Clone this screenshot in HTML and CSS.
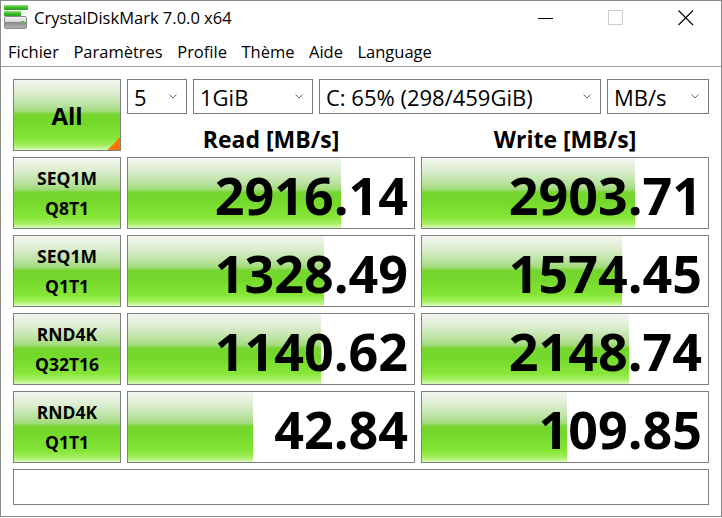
FILE: index.html
```html
<!DOCTYPE html>
<html lang="fr">
<head>
<meta charset="utf-8">
<title>CrystalDiskMark 7.0.0 x64</title>
<link rel="stylesheet" href="styles.css">
</head>
<body>
<div class="window">
  <div class="titlebar">
    <svg class="app-icon" width="24" height="25" viewBox="0 0 24 25">
      <defs>
        <linearGradient id="gbar" x1="0" y1="0" x2="0" y2="1">
          <stop offset="0" stop-color="#9be07c"/>
          <stop offset="0.5" stop-color="#3cbf2c"/>
          <stop offset="1" stop-color="#2a9c22"/>
        </linearGradient>
        <linearGradient id="drive" x1="0" y1="0" x2="0" y2="1">
          <stop offset="0" stop-color="#f4f4f4"/>
          <stop offset="0.45" stop-color="#d6d6d6"/>
          <stop offset="0.5" stop-color="#8a8a8a"/>
          <stop offset="1" stop-color="#b8b8b8"/>
        </linearGradient>
      </defs>
      <rect x="0" y="0" width="24" height="5" fill="url(#gbar)"/>
      <rect x="0" y="6" width="17" height="5" fill="url(#gbar)"/>
      <rect x="0.5" y="11.5" width="22" height="12" rx="1.5" fill="url(#drive)" stroke="#8c8c8c"/>
      <rect x="17" y="16" width="3" height="4" fill="#46c83a"/>
    </svg>
    <span class="title">CrystalDiskMark 7.0.0 x64</span>
    <div class="caption">
      <div class="cbtn">
        <svg width="16" height="16" viewBox="0 0 16 16"><line x1="0" y1="8.5" x2="15" y2="8.5" stroke="#000" stroke-width="1"/></svg>
      </div>
      <div class="cbtn">
        <svg width="16" height="16" viewBox="0 0 16 16"><rect x="0.5" y="0.5" width="14" height="14" fill="none" stroke="#cccccc" stroke-width="1"/></svg>
      </div>
      <div class="cbtn">
        <svg width="16" height="16" viewBox="0 0 16 16"><path d="M0.5 0.5 L15 15 M15 0.5 L0.5 15" stroke="#000" stroke-width="1.1" fill="none"/></svg>
      </div>
    </div>
  </div>
  <div class="menubar">
    <span class="menu-item">Fichier</span>
    <span class="menu-item">Paramètres</span>
    <span class="menu-item">Profile</span>
    <span class="menu-item">Thème</span>
    <span class="menu-item">Aide</span>
    <span class="menu-item">Language</span>
  </div>
  <div class="panel">
    <div class="grid">
      <div class="all">All</div>
      <div class="selects">
        <div class="sel w-count"><span>5</span><svg class="chev" width="8" height="5" viewBox="0 0 8 5"><path d="M0.5 0.5 L4 4 L7.5 0.5" fill="none" stroke="#6a6a6a"/></svg></div>
        <div class="sel w-size"><span>1GiB</span><svg class="chev" width="8" height="5" viewBox="0 0 8 5"><path d="M0.5 0.5 L4 4 L7.5 0.5" fill="none" stroke="#6a6a6a"/></svg></div>
        <div class="sel w-drive"><span>C: 65% (298/459GiB)</span><svg class="chev" width="8" height="5" viewBox="0 0 8 5"><path d="M0.5 0.5 L4 4 L7.5 0.5" fill="none" stroke="#6a6a6a"/></svg></div>
        <div class="sel w-unit"><span>MB/s</span><svg class="chev" width="8" height="5" viewBox="0 0 8 5"><path d="M0.5 0.5 L4 4 L7.5 0.5" fill="none" stroke="#6a6a6a"/></svg></div>
      </div>
      <div class="head">Read [MB/s]</div>
      <div class="head">Write [MB/s]</div>

      <div class="test"><span>SEQ1M</span><span>Q8T1</span></div>
      <div class="cell" style="--w:213px">2916.14</div>
      <div class="cell" style="--w:213px">2903.71</div>

      <div class="test"><span>SEQ1M</span><span>Q1T1</span></div>
      <div class="cell" style="--w:196px">1328.49</div>
      <div class="cell" style="--w:200px">1574.45</div>

      <div class="test"><span>RND4K</span><span>Q32T16</span></div>
      <div class="cell" style="--w:193px">1140.62</div>
      <div class="cell" style="--w:207px">2148.74</div>

      <div class="test"><span>RND4K</span><span>Q1T1</span></div>
      <div class="cell" style="--w:125px">42.84</div>
      <div class="cell" style="--w:145px">109.85</div>

      <div class="comment"></div>
    </div>
  </div>
</div>
</body>
</html>
```
FILE: styles.css
```css
* {
  box-sizing: border-box;
  margin: 0;
  padding: 0;
}

:root {
  --meter: linear-gradient(to bottom,
    #f4f6f2 0%,
    #dcedd0 18%,
    #b9e29e 36%,
    #9fda78 45%,
    #76d52f 49%,
    #74d92c 62%,
    #86e638 84%,
    #a2ee5c 93%,
    #d9fbbc 100%);
}

html, body {
  background: #ffffff;
}

body {
  margin: 0;
  font-family: "Open Sans", "Noto Sans", sans-serif;
  color: #000;
}

.window {
  width: 722px;
  height: 517px;
  border: 1px solid #8a8a8a;
  display: flex;
  flex-direction: column;
  background: #fff;
}

.titlebar {
  height: 33px;
  display: flex;
  align-items: center;
}

.app-icon {
  margin-left: 3px;
  flex: none;
}

.title {
  margin-left: 6px;
  font-size: 16.5px;
}

.caption {
  margin-left: auto;
  display: flex;
  height: 100%;
}

.cbtn {
  width: 70px;
  display: flex;
  align-items: center;
  justify-content: center;
}

.menubar {
  height: 33px;
  display: flex;
  align-items: center;
  gap: 14.5px;
  padding: 3px 0 0 7px;
  border-bottom: 1px solid #a0a0a0;
  font-size: 16.5px;
}

.panel {
  flex: 1;
  padding: 12px 0 0 12px;
}

.grid {
  display: grid;
  grid-template-columns: 108px 288px 288px;
  grid-template-rows: 35px 31px repeat(4, 72px) 36px;
  gap: 6px;
}

.all {
  grid-row: 1 / 3;
  border: 1px solid #7f7f7f;
  display: flex;
  align-items: center;
  justify-content: center;
  font-weight: bold;
  font-size: 24px;
  background:
    linear-gradient(to top left, #ff7400 50%, transparent 50%) right bottom / 13px 13px no-repeat,
    var(--meter);
}

.selects {
  grid-column: 2 / 4;
  display: flex;
  gap: 6px;
}

.sel {
  border: 1px solid #7a7a7a;
  display: flex;
  align-items: center;
  padding: 0 9px 0 6px;
  font-size: 22px;
  background: #fff;
}

.sel .chev {
  margin-left: auto;
  flex: none;
}

.w-count { width: 60px; }
.w-size { width: 120px; }
.w-drive { width: 282px; }
.w-unit { width: 102px; }

.head {
  display: flex;
  align-items: flex-end;
  justify-content: center;
  font-weight: bold;
  font-size: 23px;
  line-height: 23px;
}

.test {
  border: 1px solid #7f7f7f;
  background-image: var(--meter);
  display: flex;
  flex-direction: column;
  align-items: center;
  justify-content: center;
  font-weight: bold;
  font-size: 17.5px;
  line-height: 30px;
}

.cell {
  border: 1px solid #7f7f7f;
  background-color: #fff;
  background-image: var(--meter);
  background-repeat: no-repeat;
  background-position: left top;
  background-size: var(--w) 100%;
  display: flex;
  align-items: center;
  justify-content: flex-end;
  padding: 4px 6px 0 0;
  font-weight: bold;
  font-size: 52px;
  line-height: 60px;
}

.comment {
  grid-column: 1 / -1;
  border: 1px solid #7f7f7f;
  background: #fff;
}
```
